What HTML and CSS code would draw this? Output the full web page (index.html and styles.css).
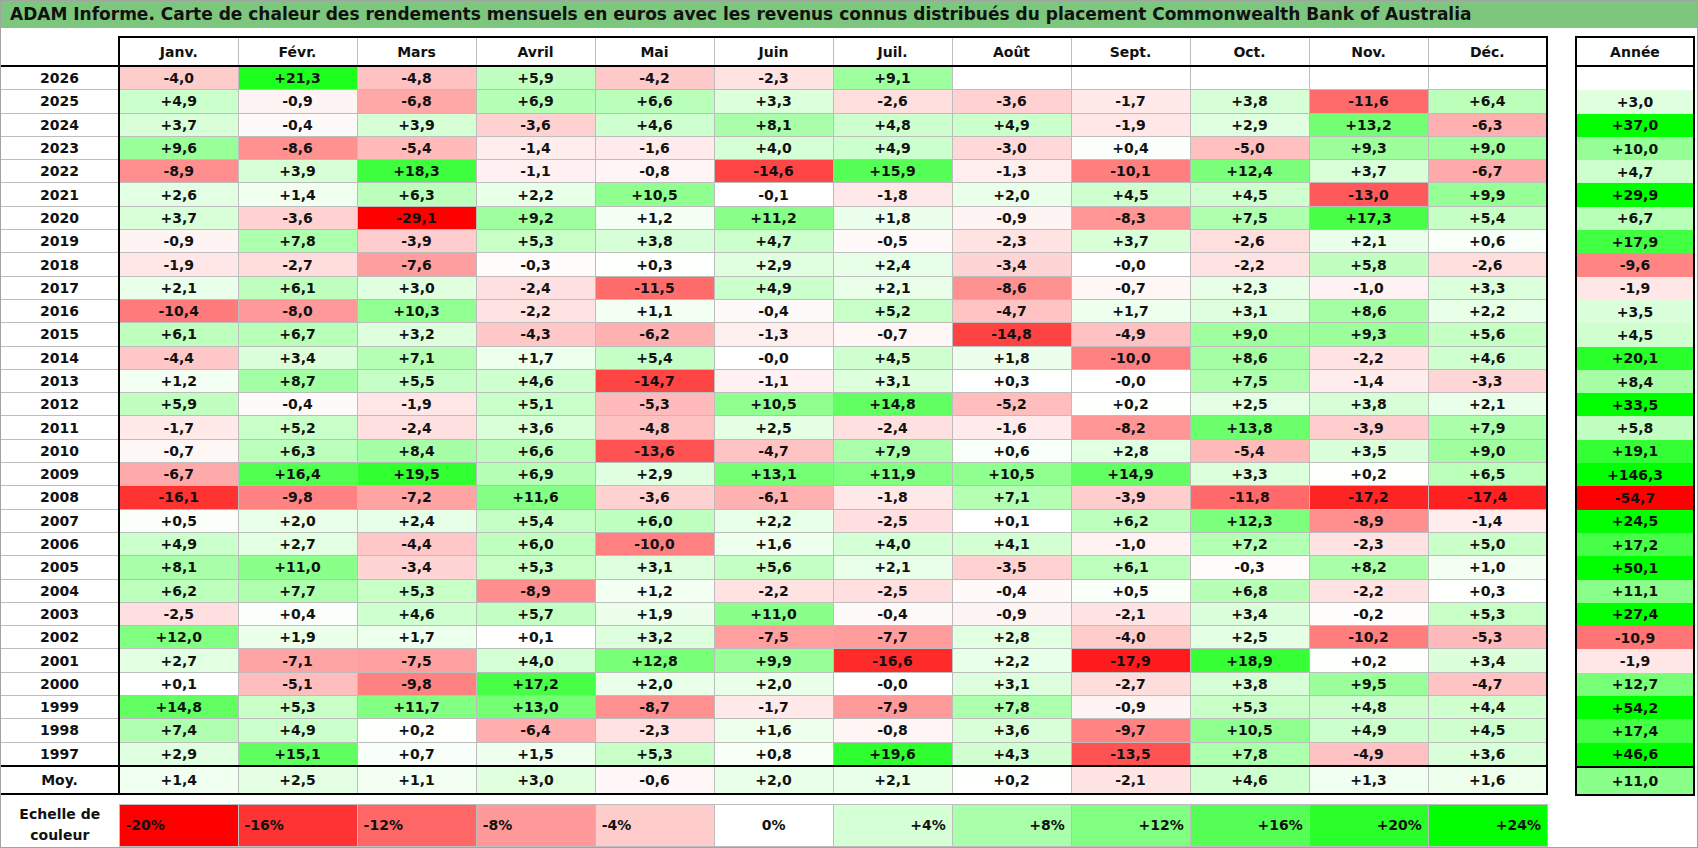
FILE: index.html
```html
<!DOCTYPE html>
<html lang="fr">
<head>
<meta charset="utf-8">
<title>ADAM Informe</title>
<link rel="stylesheet" href="styles.css">
</head>
<body>
<div class="page">
  <div class="title">ADAM Informe. Carte de chaleur des rendements mensuels en euros avec les revenus connus distribués du placement Commonwealth Bank of Australia</div>
  <div class="content">
    <div class="left">
      <table class="grid main">
        <colgroup>
          <col class="c-year">
          <col class="c-m"><col class="c-m"><col class="c-m"><col class="c-m"><col class="c-m"><col class="c-m">
          <col class="c-m"><col class="c-m"><col class="c-m"><col class="c-m"><col class="c-m"><col class="c-m">
        </colgroup>
        <thead>
          <tr>
            <th class="corner"></th>
            <th class="first">Janv.</th><th>Févr.</th><th>Mars</th><th>Avril</th><th>Mai</th><th>Juin</th>
            <th>Juil.</th><th>Août</th><th>Sept.</th><th>Oct.</th><th>Nov.</th><th class="last">Déc.</th>
          </tr>
        </thead>
        <tbody id="main-body"></tbody>
      </table>
      <table class="legend">
        <colgroup>
          <col class="c-year">
          <col class="c-m"><col class="c-m"><col class="c-m"><col class="c-m"><col class="c-m"><col class="c-m">
          <col class="c-m"><col class="c-m"><col class="c-m"><col class="c-m"><col class="c-m"><col class="c-m">
        </colgroup>
        <tbody>
          <tr id="legend-row">
            <td class="legend-label">Echelle de<br>couleur</td>
          </tr>
        </tbody>
      </table>
    </div>
    <table class="grid year">
      <thead>
        <tr><th>Année</th></tr>
      </thead>
      <tbody id="year-body"></tbody>
    </table>
  </div>
</div>
<script src="script.js"></script>
</body>
</html>
```

FILE: styles.css
```css
html, body {
  margin: 0;
  padding: 0;
  background: #ffffff;
}

.page {
  width: 1698px;
  height: 848px;
  box-sizing: border-box;
  border: 1px solid #a3a3a3;
  background: #ffffff;
  font-family: "DejaVu Sans", "Liberation Sans", sans-serif;
  font-weight: bold;
  color: #111111;
  overflow: hidden;
}

.title {
  height: 27px;
  line-height: 27px;
  background: #7dc67d;
  padding-left: 9px;
  font-size: 17px;
  white-space: nowrap;
}

.content {
  display: flex;
  align-items: flex-start;
  gap: 27px;
  padding-top: 8px;
}

.left {
  display: flex;
  flex-direction: column;
  gap: 9px;
}

.grid {
  border-collapse: collapse;
  table-layout: fixed;
}

.grid th,
.grid td {
  padding: 0;
  text-align: center;
  font-size: 14px;
  font-weight: bold;
  border: 1px solid #bdbdbd;
  white-space: nowrap;
}

.c-year { width: 118px; }
.c-m { width: 119px; }

.grid th {
  height: 27px;
  border-top: 2px solid #000;
  border-bottom: 2px solid #000;
}

.grid td {
  height: 22.3px;
}

.main th.corner {
  border-top: none;
  border-left: none;
  border-right: 2px solid #000;
}

.main th.first { border-left: 2px solid #000; }
.main th.last { border-right: 2px solid #000; }

.main td.y {
  border-left: none;
  border-right: 2px solid #000;
}

.main td.last { border-right: 2px solid #000; }

.grid tr.avg td {
  height: 26px;
  border-top: 2px solid #000;
  border-bottom: 2px solid #000;
}

.year {
  width: 120px;
}

.year th {
  border: 2px solid #000;
}

.year td {
  height: 23.3px;
  border-top: none;
  border-bottom: none;
  border-left: 2px solid #000;
  border-right: 2px solid #000;
}

.legend {
  border-collapse: collapse;
  table-layout: fixed;
}

.legend td {
  height: 40px;
  padding: 0 6px;
  font-size: 14px;
  font-weight: bold;
  border: 1px solid #bdbdbd;
}

.legend td.legend-label {
  border: none;
  text-align: center;
  line-height: 21px;
  padding: 0;
}

.legend td.neg { text-align: left; }
.legend td.zero { text-align: center; }
.legend td.pos { text-align: right; }
```

FILE: script.js
```js
var rows = [
"2026|-4,0 +21,3 -4,8 +5,9 -4,2 -2,3 +9,1 . . . . .|.",
"2025|+4,9 -0,9 -6,8 +6,9 +6,6 +3,3 -2,6 -3,6 -1,7 +3,8 -11,6 +6,4|+3,0",
"2024|+3,7 -0,4 +3,9 -3,6 +4,6 +8,1 +4,8 +4,9 -1,9 +2,9 +13,2 -6,3|+37,0",
"2023|+9,6 -8,6 -5,4 -1,4 -1,6 +4,0 +4,9 -3,0 +0,4 -5,0 +9,3 +9,0|+10,0",
"2022|-8,9 +3,9 +18,3 -1,1 -0,8 -14,6 +15,9 -1,3 -10,1 +12,4 +3,7 -6,7|+4,7",
"2021|+2,6 +1,4 +6,3 +2,2 +10,5 -0,1 -1,8 +2,0 +4,5 +4,5 -13,0 +9,9|+29,9",
"2020|+3,7 -3,6 -29,1 +9,2 +1,2 +11,2 +1,8 -0,9 -8,3 +7,5 +17,3 +5,4|+6,7",
"2019|-0,9 +7,8 -3,9 +5,3 +3,8 +4,7 -0,5 -2,3 +3,7 -2,6 +2,1 +0,6|+17,9",
"2018|-1,9 -2,7 -7,6 -0,3 +0,3 +2,9 +2,4 -3,4 -0,0 -2,2 +5,8 -2,6|-9,6",
"2017|+2,1 +6,1 +3,0 -2,4 -11,5 +4,9 +2,1 -8,6 -0,7 +2,3 -1,0 +3,3|-1,9",
"2016|-10,4 -8,0 +10,3 -2,2 +1,1 -0,4 +5,2 -4,7 +1,7 +3,1 +8,6 +2,2|+3,5",
"2015|+6,1 +6,7 +3,2 -4,3 -6,2 -1,3 -0,7 -14,8 -4,9 +9,0 +9,3 +5,6|+4,5",
"2014|-4,4 +3,4 +7,1 +1,7 +5,4 -0,0 +4,5 +1,8 -10,0 +8,6 -2,2 +4,6|+20,1",
"2013|+1,2 +8,7 +5,5 +4,6 -14,7 -1,1 +3,1 +0,3 -0,0 +7,5 -1,4 -3,3|+8,4",
"2012|+5,9 -0,4 -1,9 +5,1 -5,3 +10,5 +14,8 -5,2 +0,2 +2,5 +3,8 +2,1|+33,5",
"2011|-1,7 +5,2 -2,4 +3,6 -4,8 +2,5 -2,4 -1,6 -8,2 +13,8 -3,9 +7,9|+5,8",
"2010|-0,7 +6,3 +8,4 +6,6 -13,6 -4,7 +7,9 +0,6 +2,8 -5,4 +3,5 +9,0|+19,1",
"2009|-6,7 +16,4 +19,5 +6,9 +2,9 +13,1 +11,9 +10,5 +14,9 +3,3 +0,2 +6,5|+146,3",
"2008|-16,1 -9,8 -7,2 +11,6 -3,6 -6,1 -1,8 +7,1 -3,9 -11,8 -17,2 -17,4|-54,7",
"2007|+0,5 +2,0 +2,4 +5,4 +6,0 +2,2 -2,5 +0,1 +6,2 +12,3 -8,9 -1,4|+24,5",
"2006|+4,9 +2,7 -4,4 +6,0 -10,0 +1,6 +4,0 +4,1 -1,0 +7,2 -2,3 +5,0|+17,2",
"2005|+8,1 +11,0 -3,4 +5,3 +3,1 +5,6 +2,1 -3,5 +6,1 -0,3 +8,2 +1,0|+50,1",
"2004|+6,2 +7,7 +5,3 -8,9 +1,2 -2,2 -2,5 -0,4 +0,5 +6,8 -2,2 +0,3|+11,1",
"2003|-2,5 +0,4 +4,6 +5,7 +1,9 +11,0 -0,4 -0,9 -2,1 +3,4 -0,2 +5,3|+27,4",
"2002|+12,0 +1,9 +1,7 +0,1 +3,2 -7,5 -7,7 +2,8 -4,0 +2,5 -10,2 -5,3|-10,9",
"2001|+2,7 -7,1 -7,5 +4,0 +12,8 +9,9 -16,6 +2,2 -17,9 +18,9 +0,2 +3,4|-1,9",
"2000|+0,1 -5,1 -9,8 +17,2 +2,0 +2,0 -0,0 +3,1 -2,7 +3,8 +9,5 -4,7|+12,7",
"1999|+14,8 +5,3 +11,7 +13,0 -8,7 -1,7 -7,9 +7,8 -0,9 +5,3 +4,8 +4,4|+54,2",
"1998|+7,4 +4,9 +0,2 -6,4 -2,3 +1,6 -0,8 +3,6 -9,7 +10,5 +4,9 +4,5|+17,4",
"1997|+2,9 +15,1 +0,7 +1,5 +5,3 +0,8 +19,6 +4,3 -13,5 +7,8 -4,9 +3,6|+46,6",
"Moy.|+1,4 +2,5 +1,1 +3,0 -0,6 +2,0 +2,1 +0,2 -2,1 +4,6 +1,3 +1,6|+11,0"
];

function num(s) { return parseFloat(s.replace(",", ".")); }

function colour(v) {
  var t, c;
  if (v < 0) {
    t = Math.min(-v / 20, 1);
    c = Math.round(255 * (1 - t));
    return "rgb(255," + c + "," + c + ")";
  }
  t = Math.min(v / 24, 1);
  c = Math.round(255 * (1 - t));
  return "rgb(" + c + ",255," + c + ")";
}

function valueCell(s, cls) {
  var td = document.createElement("td");
  if (cls) td.className = cls;
  if (s !== ".") {
    td.textContent = s;
    td.style.background = colour(num(s));
  }
  return td;
}

var mainBody = document.getElementById("main-body");
var yearBody = document.getElementById("year-body");

rows.forEach(function (line) {
  var parts = line.split("|");
  var tr = document.createElement("tr");
  var tr2 = document.createElement("tr");
  if (parts[0] === "Moy.") { tr.className = "avg"; tr2.className = "avg"; }
  var y = document.createElement("td");
  y.className = "y";
  y.textContent = parts[0];
  tr.appendChild(y);
  var ms = parts[1].split(" ");
  ms.forEach(function (s, i) {
    tr.appendChild(valueCell(s, i === 11 ? "last" : ""));
  });
  tr2.appendChild(valueCell(parts[2], ""));
  mainBody.appendChild(tr);
  yearBody.appendChild(tr2);
});

var legend = document.getElementById("legend-row");
[-20, -16, -12, -8, -4, 0, 4, 8, 12, 16, 20, 24].forEach(function (v) {
  var td = document.createElement("td");
  td.className = v < 0 ? "neg" : (v === 0 ? "zero" : "pos");
  td.textContent = (v > 0 ? "+" : "") + v + "%";
  td.style.background = colour(v);
  legend.appendChild(td);
});
```
